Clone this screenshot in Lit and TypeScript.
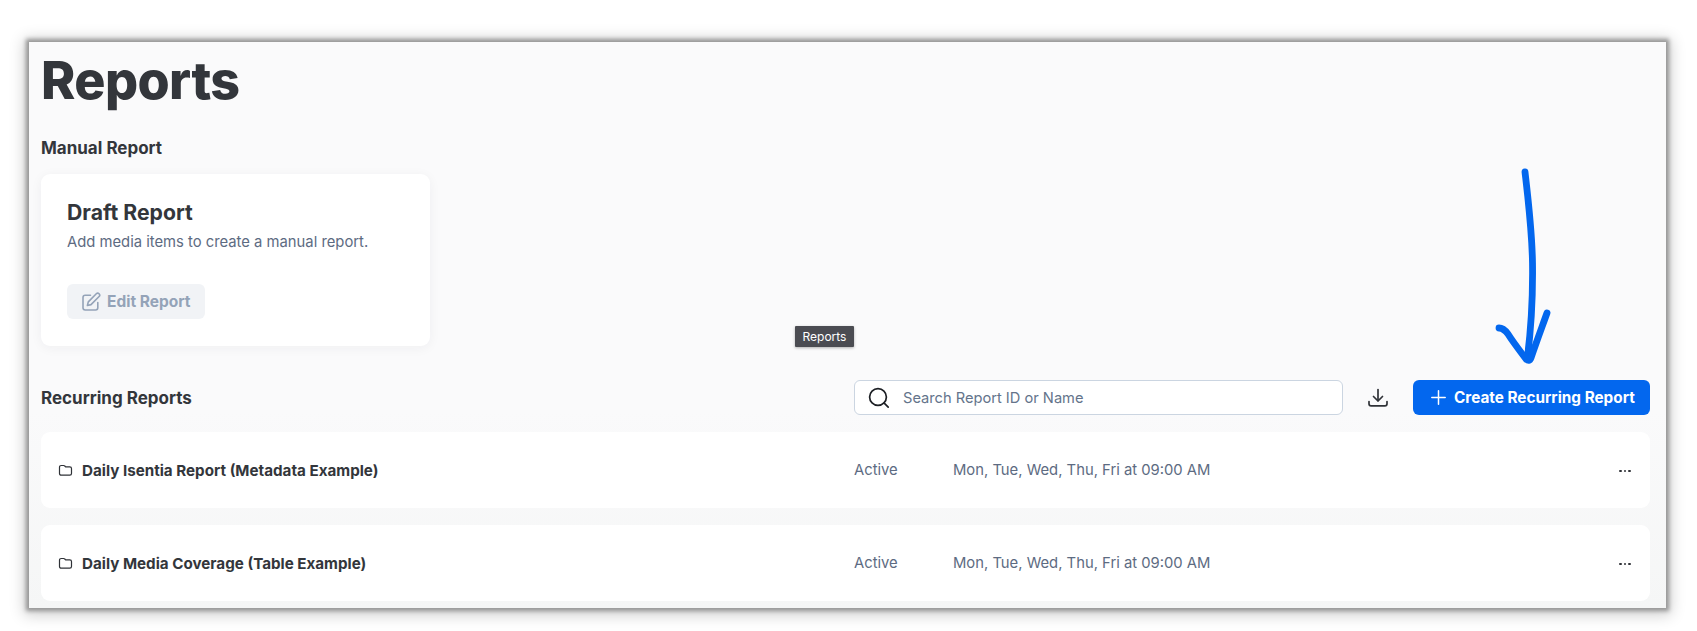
import { LitElement, html, css, svg } from 'lit'
import { customElement } from 'lit/decorators.js'

const folderIcon = svg`<path d="M1.500 4.200c0-1 .7-1.700 1.700-1.700h2.400c.5 0 .9.2 1.200.5l.8.9h4.200c1 0 1.700.7 1.700 1.700v4.900c0 1-.7 1.700-1.700 1.700H3.200c-1 0-1.700-.7-1.700-1.700V4.200z" fill="none" stroke="#2f3237" stroke-width="1.2" stroke-linejoin="round"/>`

@customElement('app-root')
export class AppRoot extends LitElement {
  static styles = css`
    :host {
      display: block;
      height: 631px;
      box-sizing: border-box;
      padding: 42px 31px 23px 29px;
      background: #fff;
      font-family: Inter, 'Noto Sans', sans-serif;
      color: #33363b;
      overflow: hidden;
    }

    .frame {
      position: relative;
      height: 566px;
      box-sizing: border-box;
      padding: 0 16px 7px 12px;
      background: linear-gradient(#fafafb 65%, #f5f6f6);
      box-shadow: 0 0 4px 3px #979797, 0 2px 14px 5px #cfcfcf;
    }

    h1 {
      margin: 0;
      padding-top: 8px;
      font-size: 52px;
      line-height: 62px;
      font-weight: 800;
      letter-spacing: -0.6px;
    }

    h2 {
      margin: 0;
      font-size: 17px;
      line-height: 24px;
      font-weight: 700;
    }

    .manual-title {
      margin-top: 24px;
    }

    .card {
      width: 389px;
      height: 172px;
      box-sizing: border-box;
      margin-top: 14px;
      padding: 24px 26px;
      background: #fff;
      border-radius: 9px;
      box-shadow: 0 2px 12px rgba(30, 40, 60, 0.05);
    }

    .card h3 {
      margin: 0;
      font-size: 21.2px;
      line-height: 28px;
      font-weight: 700;
    }

    .card p {
      margin: 5px 0 0;
      font-size: 14.8px;
      line-height: 22px;
      color: #5d6b82;
    }

    .edit {
      display: inline-flex;
      align-items: center;
      gap: 6px;
      height: 35px;
      margin-top: 31px;
      padding: 0 14px;
      background: #f1f3f6;
      border-radius: 6px;
      color: #94a3b8;
      font-size: 15.5px;
      font-weight: 700;
    }

    .toolbar {
      display: grid;
      grid-template-columns: 813px 489px 70px 237px;
      align-items: center;
      height: 35px;
      margin-top: 34px;
    }

    .search {
      display: flex;
      align-items: center;
      gap: 13px;
      height: 35px;
      box-sizing: border-box;
      padding: 0 13px;
      background: #fff;
      border: 1px solid #cbd5e1;
      border-radius: 6px;
      color: #64748b;
      font-size: 14.65px;
    }

    .download {
      display: flex;
      justify-content: center;
    }

    .create {
      display: flex;
      align-items: center;
      gap: 8px;
      height: 35px;
      box-sizing: border-box;
      padding-left: 18px;
      background: #0367ee;
      border-radius: 6px;
      color: #fff;
      font-size: 15.3px;
      font-weight: 700;
      white-space: nowrap;
    }

    .rows {
      display: flex;
      flex-direction: column;
      gap: 17px;
      margin-top: 17px;
    }

    .row {
      display: grid;
      grid-template-columns: 813px 99px 1fr auto;
      align-items: center;
      height: 76px;
      padding-right: 19px;
      background: #fff;
      border-radius: 9px;
      font-size: 14.8px;
      color: #5d6b82;
    }

    .name {
      display: flex;
      align-items: center;
      gap: 9px;
      padding-left: 17px;
      color: #33363b;
      font-size: 15.2px;
      font-weight: 700;
    }

    .dots {
      display: flex;
      gap: 2px;
      margin-top: 2px;
    }

    .dots i {
      width: 2.6px;
      height: 2.6px;
      border-radius: 50%;
      background: #2f3237;
    }

    .tooltip {
      position: absolute;
      left: 766px;
      top: 284px;
      height: 21px;
      padding: 0 7.5px;
      line-height: 21px;
      background: #4b4c52;
      border-radius: 1px;
      box-shadow: 0 1px 3px rgba(0, 0, 0, 0.3);
      color: #fff;
      font-size: 12px;
    }

    .arrow {
      position: absolute;
      left: 1461px;
      top: 118px;
      overflow: visible;
    }

    svg {
      display: block;
      flex: none;
    }
  `

  private row(name: string) {
    return html`
      <div class="row">
        <div class="name">
          <svg width="15" height="15" viewBox="0 0 15 15">${folderIcon}</svg>
          <span>${name}</span>
        </div>
        <span>Active</span>
        <span>Mon, Tue, Wed, Thu, Fri at 09:00 AM</span>
        <div class="dots"><i></i><i></i><i></i></div>
      </div>
    `
  }

  render() {
    return html`
      <div class="frame">
        <h1>Reports</h1>
        <h2 class="manual-title">Manual Report</h2>
        <div class="card">
          <h3>Draft Report</h3>
          <p>Add media items to create a manual report.</p>
          <div class="edit">
            <svg width="20" height="20" viewBox="0 0 20 20" fill="none" stroke="#94a3b8" stroke-width="1.6" stroke-linecap="round" stroke-linejoin="round">
              <path d="M9.500 3.200H4.200C2.900 3.200 2 4.100 2 5.400v10.400C2 17.100 2.900 18 4.200 18h10.400c1.300 0 2.200-.9 2.200-2.200v-5.300" />
              <path d="M15.300 1.800a1.900 1.900 0 0 1 2.800 2.700L10 12.600l-3.600.9.9-3.600 8-8.100z" />
            </svg>
            <span>Edit Report</span>
          </div>
        </div>
        <div class="toolbar">
          <h2>Recurring Reports</h2>
          <div class="search">
            <svg width="22" height="22" viewBox="0 0 22 22" fill="none" stroke="#1c1f24" stroke-width="1.7" stroke-linecap="round">
              <circle cx="10" cy="10" r="8.400" />
              <path d="M16.200 16.200l4 4" />
            </svg>
            <span>Search Report ID or Name</span>
          </div>
          <div class="download">
            <svg width="22" height="22" viewBox="0 0 22 22" fill="none" stroke="#2f3237" stroke-width="1.7" stroke-linecap="round" stroke-linejoin="round">
              <path d="M11 2.500v11" />
              <path d="M6.500 9.500l4.500 4.500 4.500-4.500" />
              <path d="M2 14.500v2.200c0 1.300.9 2.100 2.100 2.100h13.800c1.200 0 2.100-.8 2.100-2.100v-2.200" />
            </svg>
          </div>
          <div class="create">
            <svg width="15" height="15" viewBox="0 0 15 15" fill="none" stroke="#fff" stroke-width="1.5" stroke-linecap="round">
              <path d="M7.500 .8v13.400M.8 7.500h13.400" />
            </svg>
            <span>Create Recurring Report</span>
          </div>
        </div>
        <div class="rows">
          ${this.row('Daily Isentia Report (Metadata Example)')}
          ${this.row('Daily Media Coverage (Table Example)')}
        </div>
        <div class="tooltip">Reports</div>
        <svg class="arrow" width="70" height="215" viewBox="0 0 70 215" fill="none" stroke="#0367ee" stroke-width="6.800" stroke-linecap="round" stroke-linejoin="round">
          <path d="M35 12c3 26 7 58 7.500 91 .5 36-2 70-5 94" />
          <path d="M9 168c4 0 6 2 9 6 5 8 12 17 18 25 2 2 4 2 5-1 5-15 11-31 16-45" />
        </svg>
      </div>
    `
  }
}

declare global {
  interface HTMLElementTagNameMap {
    'app-root': AppRoot
  }
}
